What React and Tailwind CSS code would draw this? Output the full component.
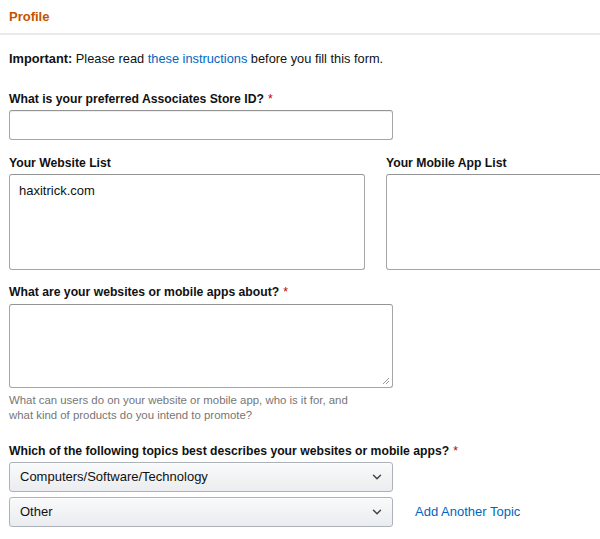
import { ChevronDown } from 'lucide-react';

const font = { fontFamily: '"Liberation Sans", Arial, sans-serif' };

// ===== FIELD LABEL =====
const Label = ({ children, required }) => (
  <div className="text-[12.2px] font-bold leading-[16px] text-[#111]">
    {children}
    {required && <span className="ml-1 text-[#c40000] font-normal">*</span>}
  </div>
);

// ===== SELECT =====
const SelectBox = ({ value }) => (
  <div className="flex items-center justify-between w-[384px] h-[30px] pl-[10px] pr-[8px] rounded-[3px] border border-[#adb1b8] bg-gradient-to-b from-[#f9fafb] to-[#eaecef] shadow-[0_1px_0_rgba(255,255,255,0.6)_inset] text-[13px] text-[#111]">
    <span>{value}</span>
    <ChevronDown size={14} strokeWidth={2.5} className="text-[#444]" />
  </div>
);

export default function App() {
  return (
    <div className="w-[600px] h-[539px] overflow-hidden bg-white" style={font}>
      {/* header */}
      <div className="h-[35px] border-b-2 border-[#eaeaea] px-[9px] pt-[7px]">
        <div className="text-[13px] font-bold text-[#c45500]">Profile</div>
      </div>

      <div className="px-[9px]">
        <p className="mt-[16px] text-[12.8px] text-[#111] leading-[16px]">
          <span className="font-bold">Important:</span> Please read{' '}
          <span className="text-[#0066c0]">these instructions</span> before you fill this form.
        </p>

        {/* store id */}
        <div className="mt-[24px]">
          <Label required>What is your preferred Associates Store ID?</Label>
          <div className="mt-[3px] w-[384px] h-[30px] rounded-[3px] border border-[#a6a6a6] border-t-[#949494] shadow-[0_1px_0_rgba(255,255,255,0.5),0_1px_0_rgba(0,0,0,0.07)_inset]" />
        </div>

        {/* lists */}
        <div className="mt-[15px] flex gap-[21px]">
          <div>
            <Label>Your Website List</Label>
            <div className="mt-[3px] w-[356px] h-[96px] rounded-[3px] border border-[#a6a6a6] border-t-[#949494] px-[9px] pt-[6px] text-[13px] text-[#111]">
              haxitrick.com
            </div>
          </div>
          <div>
            <Label>Your Mobile App List</Label>
            <div className="mt-[3px] w-[260px] h-[96px] rounded-[3px] border border-[#a6a6a6] border-t-[#949494]" />
          </div>
        </div>

        {/* about */}
        <div className="mt-[14px]">
          <Label required>What are your websites or mobile apps about?</Label>
          <div className="relative mt-[4px] w-[384px] h-[84px] rounded-[3px] border border-[#a6a6a6] border-t-[#949494]">
            <svg className="absolute right-[2px] bottom-[2px]" width="8" height="8" viewBox="0 0 8 8">
              <path d="M7 1 L1 7 M7 4 L4 7" stroke="#999" strokeWidth="1" />
            </svg>
          </div>
          <p className="mt-[5px] text-[11.4px] leading-[15px] text-[#767676] w-[352px]">
            What can users do on your website or mobile app, who is it for, and what kind of products do you intend to promote?
          </p>
        </div>

        {/* topics */}
        <div className="mt-[20px]">
          <Label required>Which of the following topics best describes your websites or mobile apps?</Label>
          <div className="mt-[3px] flex flex-col gap-[5px]">
            <SelectBox value="Computers/Software/Technology" />
            <div className="flex items-center gap-[22px]">
              <SelectBox value="Other" />
              <span className="text-[13px] text-[#0066c0]">Add Another Topic</span>
            </div>
          </div>
        </div>
      </div>
    </div>
  );
}
